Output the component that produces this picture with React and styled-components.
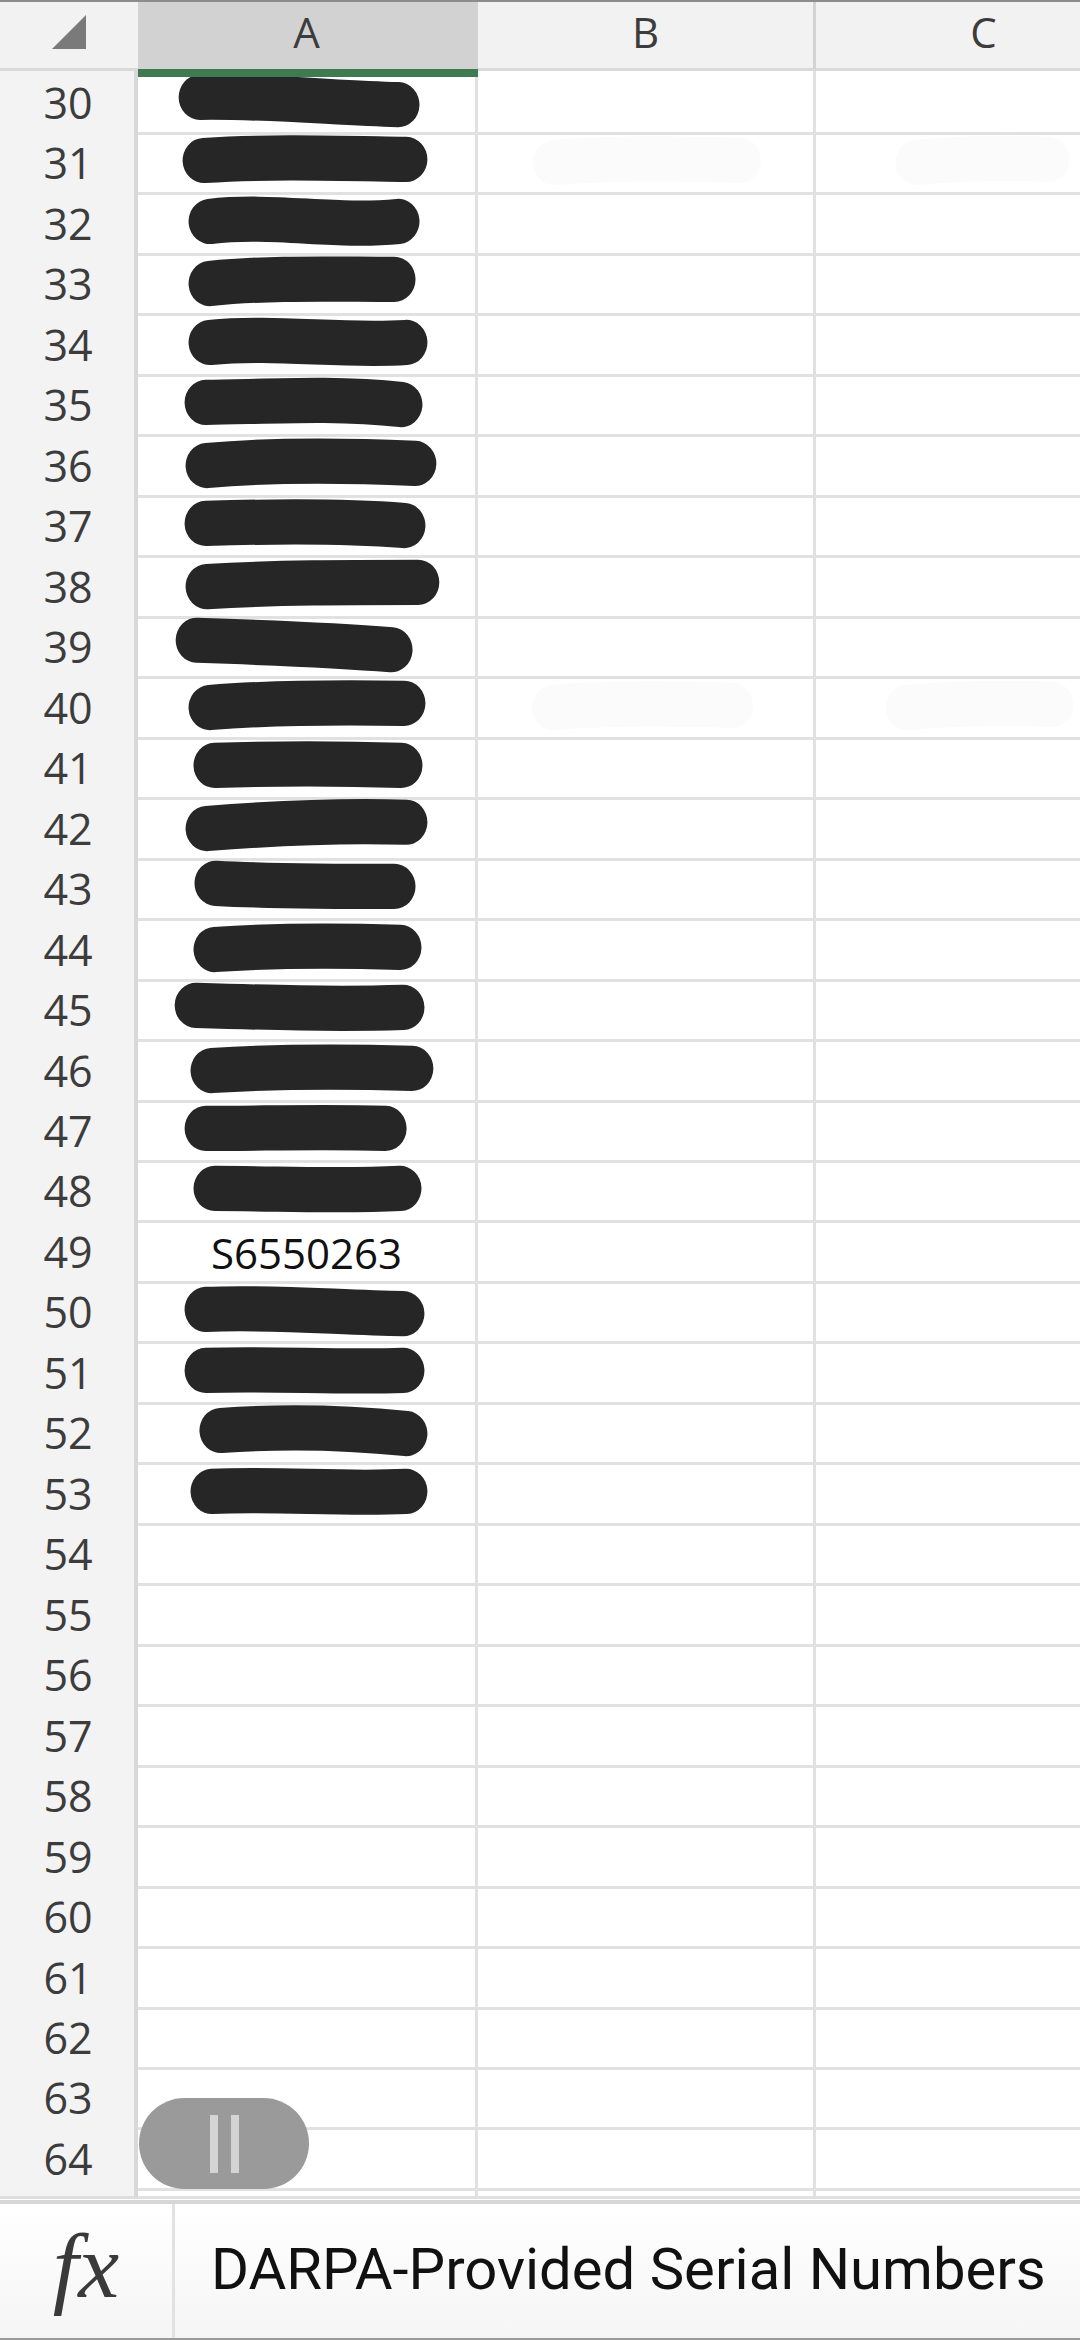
import React from "react";
import styled, { createGlobalStyle } from "styled-components";

const GlobalStyle = createGlobalStyle`
  html, body {
    margin: 0;
    padding: 0;
    background: #ffffff;
  }
  body {
    width: 1080px;
    height: 2340px;
    overflow: hidden;
    font-family: "Open Sans", "Liberation Sans", sans-serif;
  }
`;

const ROW_H = 60.47;
const COLS = "138px 340px 338px 338px";

const Screen = styled.div`
  position: relative;
  width: 1080px;
  height: 2340px;
  display: flex;
  flex-direction: column;
  overflow: hidden;
  background: #ffffff;
`;

const Sheet = styled.div`
  flex: 1;
  display: flex;
  flex-direction: column;
  overflow: hidden;
  border-top: 2px solid #8c8c8c;
`;

const HeaderRow = styled.div`
  display: grid;
  grid-template-columns: ${COLS};
  height: 69px;
  flex-shrink: 0;
`;

const Corner = styled.div`
  background: #f2f2f2;
  border-bottom: 3px solid #d9d9d9;
  display: flex;
  align-items: center;
  justify-content: center;
  padding-bottom: 6px;
`;

const ColHead = styled.div`
  position: relative;
  background: ${(p) => (p.$selected ? "#d2d2d2" : "#f2f2f2")};
  border-bottom: 3px solid ${(p) => (p.$selected ? "#d2d2d2" : "#d9d9d9")};
  border-right: 3px solid ${(p) => (p.$divider ? "#d3d3d3" : "transparent")};
  display: flex;
  align-items: center;
  justify-content: center;
  padding-bottom: 8px;
  font-size: 42px;
  color: #3c3c3c;
`;

const SelectBar = styled.div`
  position: absolute;
  left: 0;
  right: -3px;
  bottom: -9px;
  height: 8px;
  background: #3f7b50;
  z-index: 2;
`;

const Row = styled.div`
  display: grid;
  grid-template-columns: ${COLS};
  height: ${(p) => p.$h}px;
  flex-shrink: 0;
`;

const RowHead = styled.div`
  background: #f3f3f3;
  border-right: 4px solid #d8d8d8;
  border-bottom: 3px solid #dedede;
  display: flex;
  align-items: center;
  justify-content: center;
  padding-left: 2px;
  padding-top: 2px;
  font-size: 43px;
  color: #3c3c3c;
`;

const Cell = styled.div`
  position: relative;
  border-right: 3px solid #e1e1e1;
  border-bottom: 3px solid #e1e1e1;
  display: flex;
  align-items: center;
  justify-content: center;
  padding-top: 4px;
  font-size: 42px;
  color: #111111;
`;

const Marks = styled.svg`
  position: absolute;
  inset: 0;
  width: 100%;
  height: 100%;
  overflow: visible;
`;

const EndLine = styled.div`
  height: 4px;
  background: #d6d6d6;
  flex-shrink: 0;
`;

const FormulaBar = styled.div`
  height: 134px;
  flex-shrink: 0;
  display: flex;
  background: linear-gradient(#ffffff, #f5f5f5);
  border-bottom: 2px solid #9a9a9a;
`;

const FxBox = styled.div`
  width: 172px;
  border-right: 3px solid #e2e2e2;
  display: flex;
  align-items: center;
  justify-content: center;
  padding-bottom: 10px;
  font-family: "Liberation Serif", "DejaVu Serif", serif;
  font-style: italic;
  font-size: 92px;
  color: #3a3a3a;
`;

const FormulaText = styled.div`
  flex: 1;
  display: flex;
  align-items: center;
  padding-left: 36px;
  padding-bottom: 4px;
  font-family: Roboto, "Liberation Sans", sans-serif;
  font-size: 58px;
  color: #111111;
  white-space: nowrap;
`;

const Handle = styled.div`
  position: absolute;
  left: 139px;
  top: 2098px;
  width: 170px;
  height: 91px;
  border-radius: 46px;
  background: #9a9a9a;
  display: flex;
  align-items: center;
  justify-content: center;
  gap: 13px;
`;

const Grip = styled.span`
  width: 8px;
  height: 58px;
  background: #d4d4d4;
`;

// [left, right, y0, c1, c2, y3] in cell coordinates
const SCRIBBLES = {
  30: [41, 284, -3, -4, 2, 4],
  31: [45, 292, 0, -4, -2, -1],
  32: [51, 284, 0, -7, 6, 0],
  33: [51, 280, 2, -4, -2, -2],
  34: [51, 292, 0, -6, 4, 0],
  35: [47, 287, 0, -1, -5, 2],
  36: [48, 301, 2, -4, -3, 0],
  37: [47, 290, 0, -2, -3, 2],
  38: [48, 304, 2, -2, -2, -2],
  39: [38, 277, -4, -2, 0, 5],
  40: [51, 290, 2, -3, -3, -2],
  41: [56, 287, 0, -2, -2, 0],
  42: [48, 292, 2, -3, -6, -4],
  43: [57, 280, -3, 0, 0, 0],
  44: [56, 286, 2, -2, -2, 0],
  45: [37, 289, -2, 0, 2, 0],
  46: [53, 298, 2, -2, -2, 0],
  47: [47, 271, 0, 0, -2, 0],
  48: [56, 286, 0, 0, 3, 0],
  50: [47, 289, 0, -3, 3, 4],
  51: [47, 289, 0, -2, 2, 0],
  52: [62, 292, 0, -4, -3, 3],
  53: [53, 292, 0, -3, 3, 0],
};

const FAINT = {
  31: { b: [56, 287], c: [81, 257] },
  40: { b: [55, 279], c: [71, 261] },
};

function strokePath([l, r, y0, c1, c2, y3], w) {
  const cy = 28;
  const x0 = l + w / 2;
  const x3 = r - w / 2;
  const d = (x3 - x0) / 3;
  return `M ${x0} ${cy + y0} C ${x0 + d} ${cy + c1}, ${x0 + 2 * d} ${cy + c2}, ${x3} ${cy + y3}`;
}

function Scribble({ shape, color = "#262626", width = 43 }) {
  return (
    <Marks viewBox="0 0 340 58" preserveAspectRatio="none">
      <path
        d={strokePath(shape, width)}
        fill="none"
        stroke={color}
        strokeWidth={width}
        strokeLinecap="round"
        strokeLinejoin="round"
      />
    </Marks>
  );
}

const rows = [];
for (let n = 30; n <= 64; n++) rows.push(n);

export default function App() {
  return (
    <>
      <GlobalStyle />
      <Screen>
        <Sheet>
          <HeaderRow>
            <Corner>
              <svg width="36" height="36" viewBox="0 0 36 36">
                <polygon points="35,1 35,35 1,35" fill="#7a7a7a" />
              </svg>
            </Corner>
            <ColHead $selected>
              A
              <SelectBar />
            </ColHead>
            <ColHead $divider>B</ColHead>
            <ColHead>C</ColHead>
          </HeaderRow>

          {rows.map((n) => {
            const faint = FAINT[n];
            return (
              <Row key={n} $h={ROW_H}>
                <RowHead>{n}</RowHead>
                <Cell>
                  {n === 49 && "S6550263"}
                  {SCRIBBLES[n] && <Scribble shape={SCRIBBLES[n]} />}
                </Cell>
                <Cell>
                  {faint && (
                    <Scribble shape={[...faint.b, 2, -3, -2, 0]} color="#fbfbfb" />
                  )}
                </Cell>
                <Cell>
                  {faint && (
                    <Scribble shape={[...faint.c, 2, -2, -3, -1]} color="#fbfbfb" />
                  )}
                </Cell>
              </Row>
            );
          })}

          <Row $h={12}>
            <RowHead />
            <Cell />
            <Cell />
            <Cell />
          </Row>
        </Sheet>
        <EndLine />
        <FormulaBar>
          <FxBox>fx</FxBox>
          <FormulaText>DARPA-Provided Serial Numbers</FormulaText>
        </FormulaBar>

        <Handle>
          <Grip />
          <Grip />
        </Handle>
      </Screen>
    </>
  );
}
